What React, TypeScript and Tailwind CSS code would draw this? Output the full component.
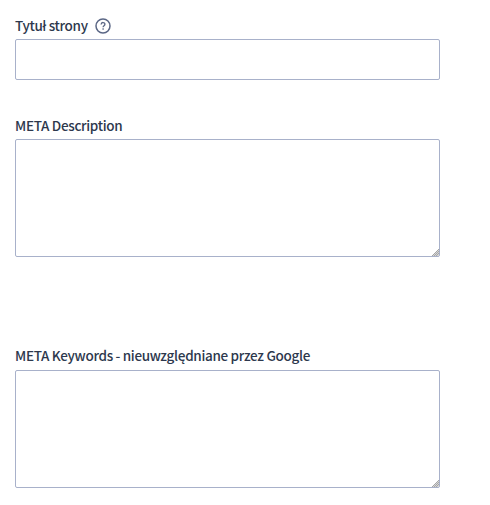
import type { ReactNode } from "react";

const Grip = () => (
  <svg
    className="absolute right-px bottom-px w-[7px] h-[7px] text-[#a6a6a6]"
    viewBox="0 0 7 7"
    stroke="currentColor"
    fill="none"
  >
    <path d="M0 7 7 0V7Z" fill="#d6d6d6" stroke="none" />
    <path
      d="M6.5 0V1M5.5 1V2M4.5 2V3M6.5 2V3M3.5 3V4M5.5 3V4M2.5 4V5M4.5 4V5M6.5 4V5M1.5 5V6M3.5 5V6M5.5 5V6M.5 6V7M2.5 6V7M4.5 6V7"
      strokeWidth={1}
    />
  </svg>
);

const Label = ({ htmlFor, children }: { htmlFor: string; children: ReactNode }) => (
  <label htmlFor={htmlFor} className="block h-5 leading-5 whitespace-nowrap">
    {children}
  </label>
);

const Area = ({ id }: { id: string }) => (
  <div className="relative h-[118px]">
    <textarea
      id={id}
      className="block w-full h-full resize-none rounded-[2px] border border-[#a8b1ca] bg-white p-2 outline-none"
    />
    <Grip />
  </div>
);

export default function App() {
  return (
    <div
      className="min-h-screen bg-white pt-[15px] pl-[15px] text-[13.5px] tracking-[-0.32px] font-medium text-[#2d384d]"
      style={{ fontFamily: '"Noto Sans CJK JP", "Noto Sans", sans-serif' }}
    >
      <form className="w-[425px]">
        <div className="flex">
          <Label htmlFor="title">Tytuł strony</Label>
          <svg className="mt-[3px] ml-[7px] w-4 h-4" viewBox="0 0 16 16" fill="none" stroke="#5b6785">
            <circle cx="8" cy="8" r="7" strokeWidth={1.5} />
            <path d="M6.1 6.4c.1-2.6 4-2.4 3.8 0-.1 1.3-1.8 1.3-1.8 2.8M8.1 10.3v1.4" strokeWidth={1.3} />
          </svg>
        </div>
        <input
          id="title"
          type="text"
          className="mt-1 block w-full h-[41px] rounded-[2px] border border-[#a8b1ca] bg-white px-2 outline-none"
        />

        <div className="mt-[35px] flex flex-col gap-1">
          <Label htmlFor="description">META Description</Label>
          <Area id="description" />
        </div>

        <div className="mt-[88px] flex flex-col gap-[5px]">
          <Label htmlFor="keywords">META Keywords - nieuwzględniane przez Google</Label>
          <Area id="keywords" />
        </div>
      </form>
    </div>
  );
}
